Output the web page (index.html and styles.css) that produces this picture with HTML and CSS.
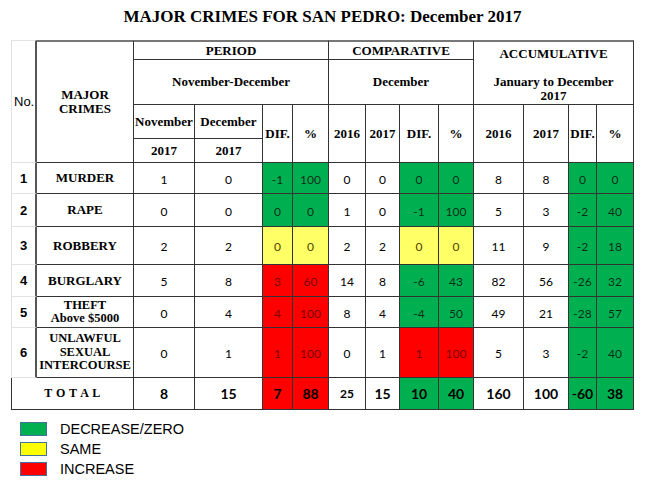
FILE: index.html
```html
<!DOCTYPE html>
<html>
<head>
<meta charset="utf-8">
<link rel="stylesheet" href="styles.css">
</head>
<body>
<div class="page">
  <h1 class="title">MAJOR CRIMES FOR SAN PEDRO: December 2017</h1>
  <table class="crimes">
    <colgroup>
      <col style="width:26px"><col style="width:97px"><col style="width:61px"><col style="width:68px">
      <col style="width:30px"><col style="width:36px"><col style="width:37px"><col style="width:34px">
      <col style="width:39px"><col style="width:35px"><col style="width:50px"><col style="width:45px">
      <col style="width:28px"><col style="width:37px">
    </colgroup>
    <tr class="hA">
      <td rowspan="4" class="no no-head">No.</td>
      <td rowspan="4" class="hd top">MAJOR<br>CRIMES</td>
      <td colspan="4" class="hd top">PERIOD</td>
      <td colspan="4" class="hd top">COMPARATIVE</td>
      <td colspan="4" rowspan="2" class="hd top accum"><div class="acc-title">ACCUMULATIVE</div><div class="acc-sub">January to December<br>2017</div></td>
    </tr>
    <tr class="hB">
      <td colspan="4" class="hd">November-December</td>
      <td colspan="4" class="hd">December</td>
    </tr>
    <tr class="hC">
      <td class="hd">November</td>
      <td class="hd">December</td>
      <td rowspan="2" class="hd">DIF.</td>
      <td rowspan="2" class="hd">%</td>
      <td rowspan="2" class="hd">2016</td>
      <td rowspan="2" class="hd">2017</td>
      <td rowspan="2" class="hd">DIF.</td>
      <td rowspan="2" class="hd">%</td>
      <td rowspan="2" class="hd">2016</td>
      <td rowspan="2" class="hd">2017</td>
      <td rowspan="2" class="hd">DIF.</td>
      <td rowspan="2" class="hd">%</td>
    </tr>
    <tr class="hD">
      <td class="hd">2017</td>
      <td class="hd">2017</td>
    </tr>
    <tr class="r1">
      <td class="no">1</td><td class="crime">MURDER</td>
      <td class="n">1</td><td class="n">0</td><td class="n g">-1</td><td class="n g">100</td>
      <td class="n">0</td><td class="n">0</td><td class="n g">0</td><td class="n g">0</td>
      <td class="n">8</td><td class="n">8</td><td class="n g">0</td><td class="n g">0</td>
    </tr>
    <tr class="r2">
      <td class="no">2</td><td class="crime">RAPE</td>
      <td class="n">0</td><td class="n">0</td><td class="n g">0</td><td class="n g">0</td>
      <td class="n">1</td><td class="n">0</td><td class="n g">-1</td><td class="n g">100</td>
      <td class="n">5</td><td class="n">3</td><td class="n g">-2</td><td class="n g">40</td>
    </tr>
    <tr class="r3">
      <td class="no">3</td><td class="crime">ROBBERY</td>
      <td class="n">2</td><td class="n">2</td><td class="n y">0</td><td class="n y">0</td>
      <td class="n">2</td><td class="n">2</td><td class="n y">0</td><td class="n y">0</td>
      <td class="n">11</td><td class="n">9</td><td class="n g">-2</td><td class="n g">18</td>
    </tr>
    <tr class="r4">
      <td class="no">4</td><td class="crime">BURGLARY</td>
      <td class="n">5</td><td class="n">8</td><td class="n r">3</td><td class="n r">60</td>
      <td class="n">14</td><td class="n">8</td><td class="n g">-6</td><td class="n g">43</td>
      <td class="n">82</td><td class="n">56</td><td class="n g">-26</td><td class="n g">32</td>
    </tr>
    <tr class="r5">
      <td class="no">5</td><td class="crime tight">THEFT<br>Above $5000</td>
      <td class="n">0</td><td class="n">4</td><td class="n r">4</td><td class="n r">100</td>
      <td class="n">8</td><td class="n">4</td><td class="n g">-4</td><td class="n g">50</td>
      <td class="n">49</td><td class="n">21</td><td class="n g">-28</td><td class="n g">57</td>
    </tr>
    <tr class="r6">
      <td class="no">6</td><td class="crime tight">UNLAWFUL<br>SEXUAL<br>INTERCOURSE</td>
      <td class="n">0</td><td class="n">1</td><td class="n r">1</td><td class="n r">100</td>
      <td class="n">0</td><td class="n">1</td><td class="n r">1</td><td class="n r">100</td>
      <td class="n">5</td><td class="n">3</td><td class="n g">-2</td><td class="n g">40</td>
    </tr>
    <tr class="rt">
      <td colspan="2" class="total-label">T O T A L</td>
      <td class="t">8</td><td class="t">15</td><td class="t r">7</td><td class="t r">88</td>
      <td class="t small">25</td><td class="t">15</td><td class="t g">10</td><td class="t g">40</td>
      <td class="t">160</td><td class="t">100</td><td class="t g">-60</td><td class="t g">38</td>
    </tr>
  </table>
  <ul class="legend">
    <li><span class="swatch sw-g"></span>DECREASE/ZERO</li>
    <li><span class="swatch sw-y"></span>SAME</li>
    <li><span class="swatch sw-r"></span>INCREASE</li>
  </ul>
</div>
</body>
</html>
```

FILE: styles.css
```css
html, body {
  margin: 0;
  padding: 0;
  background: #fff;
}

.page {
  width: 623px;
  margin-left: 11px;
}

.title {
  margin: 0;
  height: 40px;
  padding-top: 6px;
  box-sizing: border-box;
  font-family: "Liberation Serif", serif;
  font-weight: bold;
  font-size: 17px;
  line-height: 22px;
  text-align: center;
  color: #000;
}

.crimes {
  table-layout: fixed;
  border-collapse: separate;
  border-spacing: 0;
  width: 623px;
}

.crimes td {
  padding: 0;
  text-align: center;
  vertical-align: middle;
  border-right: 1px solid #333;
  border-bottom: 1px solid #333;
  color: #000;
}

.crimes td.top {
  border-top: 2px solid #777;
}

.hd {
  font-family: "Liberation Serif", serif;
  font-weight: bold;
  font-size: 13px;
  line-height: 14px;
}

.hA { height: 20px; }
.hB { height: 45px; }
.hC { height: 34px; }
.hD { height: 24px; }
.r1 { height: 31px; }
.r2 { height: 33px; }
.r3 { height: 38px; }
.r4 { height: 32px; }
.r5 { height: 31px; }
.r6 { height: 50px; }
.rt { height: 32px; }

.crimes td.accum {
  vertical-align: top;
}

.acc-title {
  margin-top: 4px;
  line-height: 16px;
}

.acc-sub {
  margin-top: 13px;
  line-height: 14px;
}

.crimes td.no {
  font-family: "Liberation Sans", Arial, sans-serif;
  font-weight: bold;
  font-size: 13px;
  border-left: 1px solid #e2e2e2;
  border-bottom: 1px solid #e2e2e2;
  border-right: 2px solid #555;
}

.crimes td.no-head {
  font-weight: normal;
  border-top: 1px solid #e2e2e2;
  text-align: left;
  padding-left: 2px;
}

.crime {
  font-family: "Liberation Serif", serif;
  font-weight: bold;
  font-size: 13px;
  line-height: 14px;
}

.crime.tight {
  font-size: 12.5px;
  line-height: 13.5px;
}

.n {
  font-family: Lato, "Open Sans", sans-serif;
  font-size: 12px;
  padding-top: 2px !important;
}

.t {
  font-family: Lato, "Open Sans", sans-serif;
  font-weight: bold;
  font-size: 14px;
}

.t.small {
  font-size: 12px;
}

.crimes td.total-label {
  border-left: 1px solid #333;
  font-family: "Liberation Serif", serif;
  font-weight: bold;
  font-size: 12px;
  letter-spacing: 0.5px;
}

.crimes td.g { background: #00b050; color: #07301a; }
.crimes td.y { background: #ffff66; color: #4d4500; }
.crimes td.r { background: #ff0000; color: #7a0000; }
.crimes td.t.g, .crimes td.t.r { color: #000; }

.legend {
  list-style: none;
  margin: 9px 0 0 9px;
  padding: 0;
  font-family: "Liberation Sans", Arial, sans-serif;
  font-size: 14.5px;
  color: #000;
}

.legend li {
  display: flex;
  align-items: center;
  height: 20px;
}

.swatch {
  width: 25px;
  height: 12px;
  border: 1px solid #41719c;
  margin-right: 13px;
}

.sw-g { background: #00b050; }
.sw-y { background: #ffff00; }
.sw-r { background: #ff0000; }
```
